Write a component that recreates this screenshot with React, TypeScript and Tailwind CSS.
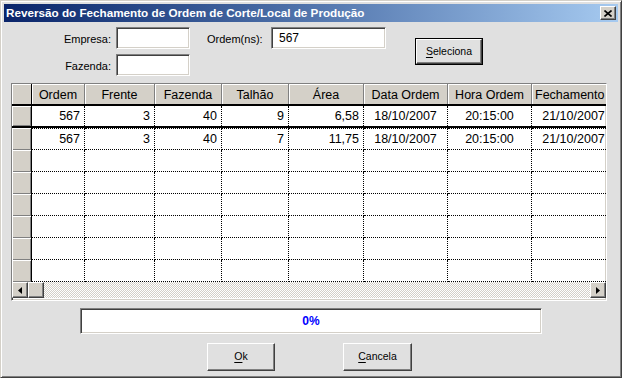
import React from "react";

type Col = { title: string; w: string; align: "right" | "center"; head?: "left" };

const COLS: Col[] = [
  { title: "Ordem", w: "w-[53px]", align: "right" },
  { title: "Frente", w: "w-[70px]", align: "right" },
  { title: "Fazenda", w: "w-[67px]", align: "right" },
  { title: "Talhão", w: "w-[67px]", align: "right" },
  { title: "Área", w: "w-[75px]", align: "right" },
  { title: "Data Ordem", w: "w-[84px]", align: "center" },
  { title: "Hora Ordem", w: "w-[84px]", align: "center" },
  { title: "Fechamento", w: "w-[84px]", align: "center", head: "left" },
];

const ROWS: string[][] = [
  ["567", "3", "40", "9", "6,58", "18/10/2007", "20:15:00", "21/10/2007"],
  ["567", "3", "40", "7", "11,75", "18/10/2007", "20:15:00", "21/10/2007"],
  ["", "", "", "", "", "", "", ""],
  ["", "", "", "", "", "", "", ""],
  ["", "", "", "", "", "", "", ""],
  ["", "", "", "", "", "", "", ""],
  ["", "", "", "", "", "", "", ""],
  ["", "", "", "", "", "", "", ""],
];

const raised =
  "border border-t-white border-l-white border-r-[#404040] border-b-[#404040] shadow-[inset_-1px_-1px_0_#808080]";
const sunken =
  "border border-t-[#808080] border-l-[#808080] border-r-white border-b-white shadow-[inset_1px_1px_0_#404040,inset_-1px_-1px_0_#d4d0c8]";

function Field({ label }: { label: string }) {
  return (
    <div className="flex h-[22px] items-center">
      <span className="w-[107px] pt-[3px] text-right text-[11px]">{label}</span>
      <div className={`ml-[5px] h-[22px] w-[74px] bg-white ${sunken}`} />
    </div>
  );
}

function Arrow({ dir }: { dir: "left" | "right" }) {
  return (
    <svg width="4" height="7" viewBox="0 0 4 7">
      <polygon points={dir === "left" ? "4,0 0,3.5 4,7" : "0,0 4,3.5 0,7"} fill="#000" />
    </svg>
  );
}

function Grid() {
  return (
    <div className={`ml-[7px] mt-[7px] flex h-[218px] w-[596px] flex-col overflow-hidden bg-white ${sunken}`}>
      {/* header */}
      <div className="flex h-[22px] shrink-0 border-b-2 border-black bg-[#d4d0c8]">
        <div className="w-[20px] shrink-0 border-r border-black shadow-[inset_1px_1px_0_#fff]" />
        {COLS.map((c) => (
          <div
            key={c.title}
            className={`${c.w} flex shrink-0 items-center overflow-hidden whitespace-nowrap border-r border-[#808080] pt-[2px] text-[12.5px] shadow-[inset_1px_1px_0_#fff] ${
              c.head === "left" ? "justify-start pl-[3px]" : "justify-center"
            }`}
          >
            {c.title}
          </div>
        ))}
      </div>

      {/* rows */}
      {ROWS.map((r, i) => (
        <div
          key={i}
          className={`flex h-[22px] shrink-0 ${i === 0 ? "border-b-2 border-black" : ""}`}
        >
          <div className="w-[20px] shrink-0 border-r border-black bg-[#d4d0c8] shadow-[inset_1px_1px_0_#fff,inset_-1px_-1px_0_#808080]" />
          {COLS.map((c, j) => (
            <div
              key={j}
              className={`${c.w} flex shrink-0 items-center overflow-hidden whitespace-nowrap border-dotted border-black text-[12.5px] ${
                i === 0 ? "border-r" : i === 1 ? "border-y border-r" : "border-b border-r"
              } ${c.align === "right" ? "justify-end pr-[4px]" : "justify-center"}`}
            >
              {r[j]}
            </div>
          ))}
        </div>
      ))}

      {/* horizontal scrollbar */}
      <div className="flex h-[16px] shrink-0">
        <div className={`flex h-[16px] w-[16px] shrink-0 items-center justify-center bg-[#d4d0c8] ${raised}`}>
          <Arrow dir="left" />
        </div>
        <div className={`h-[16px] w-[16px] shrink-0 bg-[#d4d0c8] ${raised}`} />
        <div className="flex-1 bg-[repeating-conic-gradient(#d4d0c8_0_25%,#ffffff_0_50%)] bg-[length:2px_2px]" />
        <div className={`flex h-[16px] w-[16px] shrink-0 items-center justify-center bg-[#d4d0c8] ${raised}`}>
          <Arrow dir="right" />
        </div>
      </div>
    </div>
  );
}

function WinButton({ w, mnemonic, rest, isDefault }: { w: string; mnemonic: string; rest: string; isDefault?: boolean }) {
  const inner = (
    <div className={`flex h-full w-full items-center justify-center bg-[#e0e0e0] ${raised}`}>
      <span className="text-[10.5px]">
        <span className="underline underline-offset-2">{mnemonic}</span>
        {rest}
      </span>
    </div>
  );
  return isDefault ? (
    <div className={`${w} h-[27px] border border-black`}>{inner}</div>
  ) : (
    <div className={`${w} h-[28px]`}>{inner}</div>
  );
}

export default function App() {
  return (
    <div className="h-[378px] w-[622px] border border-t-[#d4d0c8] border-l-[#d4d0c8] border-r-[#404040] border-b-[#404040] bg-[#e0e0e0] p-[3px] font-['Liberation_Sans',Arial,sans-serif] text-black shadow-[inset_1px_1px_0_#fff,inset_-1px_-1px_0_#808080]">
      {/* title bar */}
      <div className="flex h-[18px] items-center bg-linear-to-r from-[#0a246a] to-[#a6caf0] pl-[2px] pr-[2px]">
        <span className="flex-1 whitespace-nowrap text-[11.7px] font-bold text-white">
          Reversão do Fechamento de Ordem de Corte/Local de Produção
        </span>
        <div className={`flex h-[14px] w-[16px] items-center justify-center bg-[#d4d0c8] ${raised}`}>
          <svg width="8" height="7" viewBox="0 0 8 7">
            <path d="M0.5 0.5 L7.5 6.5 M7.5 0.5 L0.5 6.5" stroke="#000" strokeWidth="1.6" />
          </svg>
        </div>
      </div>

      {/* filter form */}
      <div className="flex pt-[5px]">
        <div className="flex flex-col gap-[5px]">
          <Field label="Empresa:" />
          <Field label="Fazenda:" />
        </div>
        <div className="ml-[17px] flex h-[22px] items-center">
          <span className="w-[64px] pt-[3px] text-[11px]">Ordem(ns):</span>
          <div className={`flex h-[22px] w-[115px] items-center bg-white pl-[7px] text-[12px] ${sunken}`}>567</div>
        </div>
        <div className="ml-[29px] mt-[11px]">
          <WinButton w="w-[68px]" mnemonic="S" rest="eleciona" isDefault />
        </div>
      </div>

      <Grid />

      {/* progress */}
      <div className={`ml-[76px] mt-[7px] flex h-[26px] w-[462px] items-center justify-center bg-white text-[12px] font-bold text-[#0000ff] ${sunken}`}>
        0%
      </div>

      {/* buttons */}
      <div className="mt-[9px] flex">
        <div className="ml-[203px]">
          <WinButton w="w-[68px]" mnemonic="O" rest="k" />
        </div>
        <div className="ml-[68px]">
          <WinButton w="w-[69px]" mnemonic="C" rest="ancela" />
        </div>
      </div>
    </div>
  );
}
